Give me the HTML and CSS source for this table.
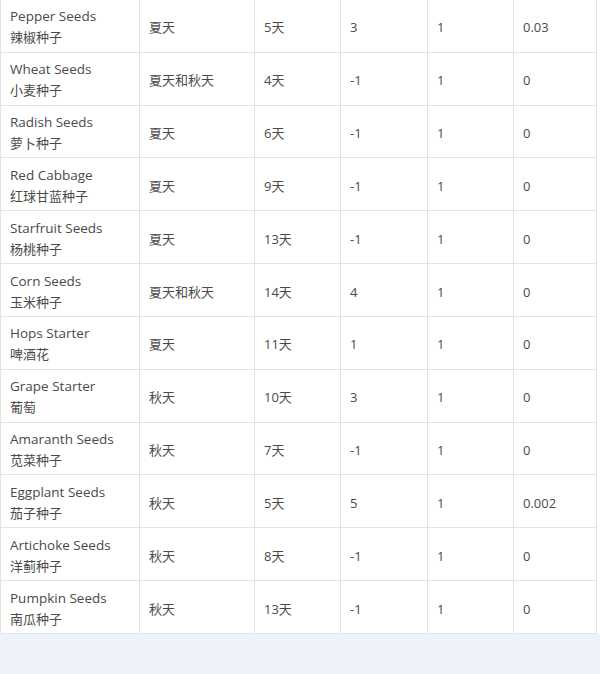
FILE: index.html
```html
<!DOCTYPE html>
<html>
<head>
<meta charset="utf-8">
<link rel="stylesheet" href="styles.css">
</head>
<body>
<div class="page">
  <div class="table">
    <div class="cell name"><span class="en">Pepper Seeds</span><span class="zh">辣椒种子</span></div>
    <div class="cell">夏天</div><div class="cell">5天</div><div class="cell">3</div><div class="cell">1</div><div class="cell">0.03</div>

    <div class="cell name"><span class="en">Wheat Seeds</span><span class="zh">小麦种子</span></div>
    <div class="cell">夏天和秋天</div><div class="cell">4天</div><div class="cell">-1</div><div class="cell">1</div><div class="cell">0</div>

    <div class="cell name"><span class="en">Radish Seeds</span><span class="zh">萝卜种子</span></div>
    <div class="cell">夏天</div><div class="cell">6天</div><div class="cell">-1</div><div class="cell">1</div><div class="cell">0</div>

    <div class="cell name"><span class="en">Red Cabbage</span><span class="zh">红球甘蓝种子</span></div>
    <div class="cell">夏天</div><div class="cell">9天</div><div class="cell">-1</div><div class="cell">1</div><div class="cell">0</div>

    <div class="cell name"><span class="en">Starfruit Seeds</span><span class="zh">杨桃种子</span></div>
    <div class="cell">夏天</div><div class="cell">13天</div><div class="cell">-1</div><div class="cell">1</div><div class="cell">0</div>

    <div class="cell name"><span class="en">Corn Seeds</span><span class="zh">玉米种子</span></div>
    <div class="cell">夏天和秋天</div><div class="cell">14天</div><div class="cell">4</div><div class="cell">1</div><div class="cell">0</div>

    <div class="cell name"><span class="en">Hops Starter</span><span class="zh">啤酒花</span></div>
    <div class="cell">夏天</div><div class="cell">11天</div><div class="cell">1</div><div class="cell">1</div><div class="cell">0</div>

    <div class="cell name"><span class="en">Grape Starter</span><span class="zh">葡萄</span></div>
    <div class="cell">秋天</div><div class="cell">10天</div><div class="cell">3</div><div class="cell">1</div><div class="cell">0</div>

    <div class="cell name"><span class="en">Amaranth Seeds</span><span class="zh">苋菜种子</span></div>
    <div class="cell">秋天</div><div class="cell">7天</div><div class="cell">-1</div><div class="cell">1</div><div class="cell">0</div>

    <div class="cell name"><span class="en">Eggplant Seeds</span><span class="zh">茄子种子</span></div>
    <div class="cell">秋天</div><div class="cell">5天</div><div class="cell">5</div><div class="cell">1</div><div class="cell">0.002</div>

    <div class="cell name"><span class="en">Artichoke Seeds</span><span class="zh">洋蓟种子</span></div>
    <div class="cell">秋天</div><div class="cell">8天</div><div class="cell">-1</div><div class="cell">1</div><div class="cell">0</div>

    <div class="cell name"><span class="en">Pumpkin Seeds</span><span class="zh">南瓜种子</span></div>
    <div class="cell">秋天</div><div class="cell">13天</div><div class="cell">-1</div><div class="cell">1</div><div class="cell">0</div>
  </div>
  <div class="footer"></div>
</div>
</body>
</html>
```

FILE: styles.css
```css
html, body {
  margin: 0;
  padding: 0;
  background: #eef2f9;
}
.page {
  width: 600px;
  height: 674px;
  display: flex;
  flex-direction: column;
  background: linear-gradient(#fff, #fff) top / 600px 634px no-repeat, #eef2f9;
}
.table {
  display: grid;
  grid-template-columns: 139px 115px 86px 87px 86px 83px;
  grid-template-rows: repeat(12, 52.83px);
  width: 596px;
  background: #fff;
  border-left: 1px solid #e3e3e3;
  box-sizing: border-box;
  font-family: "Open Sans", "Noto Sans CJK SC", sans-serif;
  font-size: 13px;
  color: #4a4a4a;
}
.cell {
  box-sizing: border-box;
  border-right: 1px solid #e3e3e3;
  border-bottom: 1px solid #e3e3e3;
  padding: 4px 0 0 9px;
  display: flex;
  align-items: center;
  line-height: 21px;
}
.cell.name {
  flex-direction: column;
  align-items: flex-start;
  justify-content: center;
  padding-top: 3px;
}
.en {
  font-size: 13.5px;
}
.zh {
  font-size: 13px;
}
.footer {
  flex: 1;
}
```
